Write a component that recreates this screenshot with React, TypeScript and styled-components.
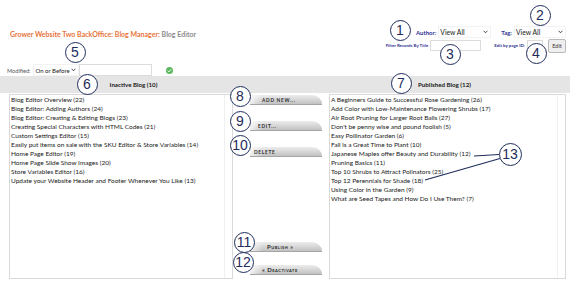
import React from 'react'
import styled, { createGlobalStyle } from 'styled-components'

const navy = '#1f2d5c'
const labelBlue = '#2e3192'

const inactiveBlogs = [
  'Blog Editor Overview (22)',
  'Blog Editor: Adding Authors (24)',
  'Blog Editor: Creating & Editing Blogs (23)',
  'Creating Special Characters with HTML Codes (21)',
  'Custom Settings Editor (15)',
  'Easily put items on sale with the SKU Editor & Store Variables (14)',
  'Home Page Editor (19)',
  'Home Page Slide Show Images (20)',
  'Store Variables Editor (16)',
  'Update your Website Header and Footer Whenever You Like (13)',
]

const publishedBlogs = [
  'A Beginners Guide to Successful Rose Gardening (26)',
  'Add Color with Low-Maintenance Flowering Shrubs (17)',
  'Air Root Pruning for Larger Root Balls (27)',
  "Don't be penny wise and pound foolish (5)",
  'Easy Pollinator Garden (6)',
  'Fall is a Great Time to Plant (10)',
  'Japanese Maples offer Beauty and Durability (12)',
  'Pruning Basics (11)',
  'Top 10 Shrubs to Attract Polinators (25)',
  'Top 12 Perennials for Shade (18)',
  'Using Color in the Garden (9)',
  'What are Seed Tapes and How Do I Use Them? (7)',
]

// annotation callouts laid over the screenshot: [label, centre x, centre y, diameter]
const callouts: [string, number, number, number][] = [
  ['1', 400, 30, 21],
  ['2', 540, 15, 21],
  ['3', 450, 54, 21],
  ['4', 536, 53, 21],
  ['5', 75, 52, 21],
  ['6', 87, 84, 21],
  ['7', 401, 83, 21],
  ['8', 240, 96, 21],
  ['9', 240, 121, 21],
  ['10', 240, 145, 21],
  ['11', 244, 242, 21],
  ['12', 243, 262, 21],
  ['13', 510, 154, 23],
]

const GlobalStyle = createGlobalStyle`
  html, body {
    margin: 0;
    padding: 0;
    background: #fff;
  }
  body {
    font-family: Lato, "Open Sans", sans-serif;
  }
`

const Page = styled.div`
  position: relative;
  width: 570px;
  height: 281px;
  overflow: hidden;
  background: #fff;
`

const TopBar = styled.div`
  display: flex;
  justify-content: space-between;
  align-items: flex-start;
  height: 27px;
  padding: 26px 4px 0 10px;
`

const Title = styled.h1`
  margin: 3px 0 0;
  font-size: 7px;
  line-height: 10px;
  font-weight: 700;
  color: #e8733a;
  white-space: nowrap;

  span {
    color: #8c8c8c;
  }
`

const Filters = styled.div`
  display: flex;
  flex-direction: column;
  align-items: flex-end;
`

const FilterRow = styled.div<{ $h: number }>`
  display: flex;
  align-items: center;
  height: ${({ $h }) => $h}px;
`

const FieldLabel = styled.span<{ $gap?: number }>`
  margin-left: ${({ $gap }) => $gap || 0}px;
  margin-right: 2px;
  font-size: 6px;
  font-weight: 700;
  color: ${labelBlue};
  white-space: nowrap;
`

const TinyLabel = styled.span<{ $gap?: number }>`
  margin-left: ${({ $gap }) => $gap || 0}px;
  margin-right: 2px;
  font-size: 4.4px;
  font-weight: 700;
  color: ${labelBlue};
  white-space: nowrap;
`

const SelectBox = styled.div<{ $w: number; $size?: number }>`
  display: flex;
  align-items: center;
  justify-content: space-between;
  box-sizing: border-box;
  width: ${({ $w }) => $w}px;
  height: 12px;
  padding: 0 2px 0 1px;
  font-size: ${({ $size }) => $size || 6.8}px;
  color: #1a1a1a;
  border: 1px solid #f2f2f2;
  white-space: nowrap;
`

const TextBox = styled.div<{ $w: number; $h: number }>`
  box-sizing: border-box;
  width: ${({ $w }) => $w}px;
  height: ${({ $h }) => $h}px;
  border: 1px solid #dcdcdc;
  background: #fff;
`

const EditButton = styled.button`
  box-sizing: border-box;
  width: 18px;
  height: 14px;
  margin-left: 5px;
  padding: 0;
  font-family: Lato, sans-serif;
  font-size: 5.5px;
  color: #333;
  background: #efefef;
  border: 1px solid #b9b9b9;
  border-radius: 2px;
`

const ModifiedRow = styled.div`
  display: flex;
  align-items: center;
  height: 12px;
  margin-top: 11px;
  padding-left: 7px;
`

const SmallLabel = styled.span`
  margin-right: 3px;
  font-size: 5.6px;
  color: #555;
`

const OkDot = styled.svg`
  margin-left: 14px;
`

const PanelHeader = styled.div`
  display: grid;
  grid-template-columns: 233px 96px 237px;
  height: 17px;
  background: #e5e5e5;
`

const HeaderCell = styled.div<{ $shift: number }>`
  display: flex;
  align-items: center;
  justify-content: center;
  padding-left: ${({ $shift }) => Math.max($shift, 0)}px;
  padding-right: ${({ $shift }) => Math.max(-$shift, 0)}px;
  font-size: 6.2px;
  font-weight: 700;
  color: #1a1a1a;
  white-space: nowrap;
`

const Panels = styled.div`
  display: grid;
  grid-template-columns: 224px 96px 237px;
  height: 185px;
  padding: 1px 0 0 9px;
`

const ListBox = styled.ul`
  box-sizing: border-box;
  margin: 0;
  padding: 0 0 0 1px;
  list-style: none;
  border: 1px solid #d9d9d9;
  box-shadow: inset -7px 0 0 #fff, inset -8px 0 0 #f0f0f0;
`

const ListItem = styled.li`
  font-size: 6.5px;
  line-height: 9px;
  color: #1a1a1a;
  white-space: nowrap;
`

const ActionColumn = styled.div`
  display: flex;
  flex-direction: column;
  align-items: flex-end;
  gap: 17px;
  padding: 1px 7px 5px 0;
`

const BottomActions = styled.div`
  display: flex;
  flex-direction: column;
  align-items: flex-end;
  gap: 14px;
  margin-top: auto;
`

const TabButton = styled.button<{ $indent: number }>`
  display: flex;
  align-items: center;
  box-sizing: border-box;
  width: 72px;
  height: 9px;
  padding: 0 0 0 ${({ $indent }) => $indent}px;
  border: 0;
  border-radius: 0 10px 0 0 / 0 9px 0 0;
  background:
    linear-gradient(90deg, rgba(255, 255, 255, 0.75), rgba(255, 255, 255, 0) 18%),
    linear-gradient(#ececec, #c2c2c2);
  box-shadow: 0 1px 0 #a5a5a5;
  font-family: Lato, sans-serif;
  font-size: 4.8px;
  font-weight: 700;
  letter-spacing: 0.7px;
  color: #2a2a2a;
  text-transform: uppercase;
  white-space: nowrap;
`

const CapsButton = styled(TabButton)`
  font-size: 6px;
  letter-spacing: 0.5px;
  text-transform: none;
  font-variant: small-caps;
`

const Callout = styled.div<{ $x: number; $y: number; $d: number }>`
  position: absolute;
  left: ${({ $x, $d }) => $x - $d / 2}px;
  top: ${({ $y, $d }) => $y - $d / 2}px;
  display: flex;
  align-items: center;
  justify-content: center;
  box-sizing: border-box;
  width: ${({ $d }) => $d}px;
  height: ${({ $d }) => $d}px;
  border: 1.5px solid ${navy};
  border-radius: 50%;
  background: #fff;
  font-family: "Liberation Sans", Arial, sans-serif;
  font-size: 14px;
  line-height: 1;
  color: ${navy};
`

const Pointers = styled.svg`
  position: absolute;
  left: 0;
  top: 0;
`

const Chevron = () => (
  <svg width="5" height="4" viewBox="0 0 5 4">
    <path d="M0.6 0.8 L2.5 2.8 L4.4 0.8" fill="none" stroke="#333" strokeWidth="0.9" />
  </svg>
)

const App = () => (
  <Page>
    <GlobalStyle />
    <TopBar>
      <Title>
        Grower Website Two BackOffice: Blog Manager: <span>Blog Editor</span>
      </Title>
      <Filters>
        <FilterRow $h={12}>
          <FieldLabel>Author:</FieldLabel>
          <SelectBox $w={53}>
            View All <Chevron />
          </SelectBox>
          <FieldLabel $gap={10}>Tag:</FieldLabel>
          <SelectBox $w={52}>
            View All <Chevron />
          </SelectBox>
        </FilterRow>
        <FilterRow $h={15}>
          <TinyLabel>Filter Records By Title</TinyLabel>
          <TextBox $w={51} $h={11} />
          <TinyLabel $gap={13}>Edit by page ID:</TinyLabel>
          <TextBox $w={16} $h={11} />
          <EditButton>Edit</EditButton>
        </FilterRow>
      </Filters>
    </TopBar>

    <ModifiedRow>
      <SmallLabel>Modified:</SmallLabel>
      <SelectBox $w={46} $size={6}>
        On or Before <Chevron />
      </SelectBox>
      <TextBox $w={73} $h={12} />
      <OkDot width="7" height="7" viewBox="0 0 7 7">
        <circle cx="3.5" cy="3.5" r="3.5" fill="#5cb85c" />
        <path d="M1.8 3.6 L3 4.8 L5.2 2.4" fill="none" stroke="#fff" strokeWidth="1" />
      </OkDot>
    </ModifiedRow>

    <PanelHeader>
      <HeaderCell $shift={34}>Inactive Blog (10)</HeaderCell>
      <div />
      <HeaderCell $shift={-6}>Published Blog (12)</HeaderCell>
    </PanelHeader>

    <Panels>
      <ListBox>
        {inactiveBlogs.map((title) => (
          <ListItem key={title}>{title}</ListItem>
        ))}
      </ListBox>
      <ActionColumn>
        <TabButton $indent={12}>Add new...</TabButton>
        <TabButton $indent={8}>Edit...</TabButton>
        <TabButton $indent={4}>Delete</TabButton>
        <BottomActions>
          <CapsButton $indent={17}>Publish &raquo;</CapsButton>
          <CapsButton $indent={12}>&laquo; Deactivate</CapsButton>
        </BottomActions>
      </ActionColumn>
      <ListBox>
        {publishedBlogs.map((title) => (
          <ListItem key={title}>{title}</ListItem>
        ))}
      </ListBox>
    </Panels>

    <Pointers width="570" height="281">
      <line x1="474" y1="156" x2="499" y2="154.5" stroke={navy} strokeWidth="1.2" />
      <line x1="425" y1="180" x2="500" y2="158.5" stroke={navy} strokeWidth="1.2" />
    </Pointers>
    {callouts.map(([label, x, y, d]) => (
      <Callout key={label} $x={x} $y={y} $d={d}>
        {label}
      </Callout>
    ))}
  </Page>
)

export default App
